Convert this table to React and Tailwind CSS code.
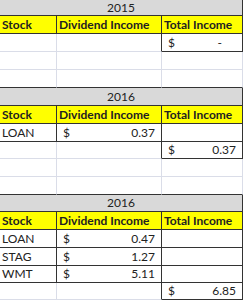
import React from "react";

const FONT = { fontFamily: "Lato, 'Open Sans', Arial, sans-serif" };

// Column widths include the 1px right border of each cell.
const COL_A = "w-[57px]";
const COL_B = "w-[105px]";
const COL_C = "w-[81px]";

const LIGHT = "border-r border-b border-r-[#dadde8] border-b-[#dadde8]";
const BOX = "border-r border-b border-r-[#333] border-b-[#333]";
const LIGHT_R_DARK_B = "border-r border-b border-r-[#dadde8] border-b-[#333]";
const DARK_R_LIGHT_B = "border-r border-b border-r-[#333] border-b-[#dadde8]";

function Row({ h, children }) {
  return <div className={`flex ${h}`}>{children}</div>;
}

function Cell({ w, b, className = "", children }) {
  return (
    <div className={`${w} ${b} h-full shrink-0 flex items-center ${className}`}>
      {children}
    </div>
  );
}

function Money({ value, padRight = "pr-[6px]" }) {
  return (
    <div className={`flex w-full items-center justify-between pl-[6px] ${padRight}`}>
      <span>$</span>
      <span>{value}</span>
    </div>
  );
}

function EmptyRow({ h, darkBottom }) {
  const b = darkBottom ? LIGHT_R_DARK_B : LIGHT;
  return (
    <Row h={h}>
      <Cell w={COL_A} b={b} />
      <Cell w={COL_B} b={b} />
      <Cell w={COL_C} b={b} />
    </Row>
  );
}

function TitleRow({ h, year }) {
  return (
    <Row h={h}>
      <div className={`w-[243px] h-full bg-[#d9d9d9] ${BOX} flex items-center justify-center`}>
        {year}
      </div>
    </Row>
  );
}

function HeaderRow({ h }) {
  return (
    <Row h={h}>
      <Cell w={COL_A} b={BOX} className="bg-[#ffff00] font-bold pl-[2px]">Stock</Cell>
      <Cell w={COL_B} b={BOX} className="bg-[#ffff00] font-bold pl-[2px]">Dividend Income</Cell>
      <Cell w={COL_C} b={BOX} className="bg-[#ffff00] font-bold pl-[2px]">Total Income</Cell>
    </Row>
  );
}

function StockRow({ h, name, value }) {
  return (
    <Row h={h}>
      <Cell w={COL_A} b={BOX} className="pl-[2px]">{name}</Cell>
      <Cell w={COL_B} b={BOX}>
        <Money value={value} />
      </Cell>
      <Cell w={COL_C} b={BOX} />
    </Row>
  );
}

function TotalRow({ h, value, padRight }) {
  return (
    <Row h={h}>
      <Cell w={COL_A} b={LIGHT} />
      <Cell w={COL_B} b={DARK_R_LIGHT_B} />
      <Cell w={COL_C} b={BOX}>
        <Money value={value} padRight={padRight} />
      </Cell>
    </Row>
  );
}

export default function App() {
  return (
    <div className="w-[243px] h-[300px] overflow-hidden bg-white text-[12px] text-[#222]" style={FONT}>
      <TitleRow h="h-[16px]" year="2015" />
      <HeaderRow h="h-[18px]" />
      <TotalRow h="h-[18px]" value="-" padRight="pr-[20px]" />
      <EmptyRow h="h-[18px]" />
      <EmptyRow h="h-[18px]" darkBottom />

      <TitleRow h="h-[18px]" year="2016" />
      <HeaderRow h="h-[18px]" />
      <StockRow h="h-[18px]" name="LOAN" value="0.37" />
      <TotalRow h="h-[17px]" value="0.37" />
      <EmptyRow h="h-[18px]" />
      <EmptyRow h="h-[18px]" darkBottom />

      <TitleRow h="h-[17px]" year="2016" />
      <HeaderRow h="h-[18px]" />
      <StockRow h="h-[18px]" name="LOAN" value="0.47" />
      <StockRow h="h-[18px]" name="STAG" value="1.27" />
      <StockRow h="h-[17px]" name="WMT" value="5.11" />
      <TotalRow h="h-[17px]" value="6.85" />
    </div>
  );
}
